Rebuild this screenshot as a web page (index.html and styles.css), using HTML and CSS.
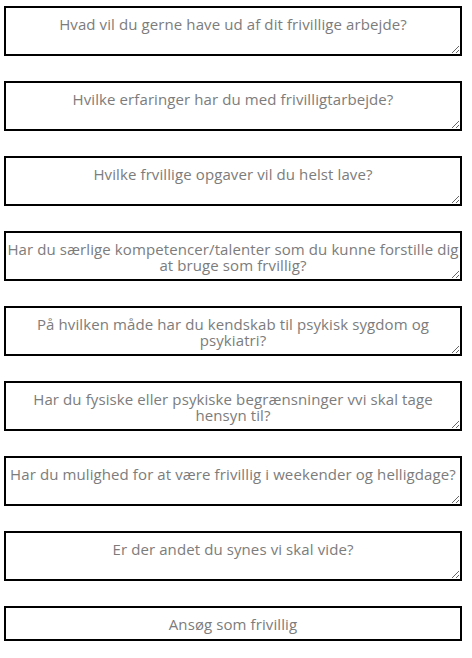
FILE: index.html
```html
<!DOCTYPE html>
<html lang="da">
<head>
  <meta charset="UTF-8">
  <meta name="viewport" content="width=device-width, initial-scale=1.0">
  <title>Frivillig</title>
  <link rel="stylesheet" href="styles.css">
</head>
<body>
  <form class="frivillig-form">
    <textarea class="felt" placeholder="Hvad vil du gerne have ud af dit frivillige arbejde?"></textarea>
    <textarea class="felt" placeholder="Hvilke erfaringer har du med frivilligtarbejde?"></textarea>
    <textarea class="felt" placeholder="Hvilke frvillige opgaver vil du helst lave?"></textarea>
    <textarea class="felt" placeholder="Har du særlige kompetencer/talenter som du kunne forstille dig&#10;at bruge som frvillig?"></textarea>
    <textarea class="felt" placeholder="På hvilken måde har du kendskab til psykisk sygdom og&#10;psykiatri?"></textarea>
    <textarea class="felt" placeholder="Har du fysiske eller psykiske begrænsninger vvi skal tage&#10;hensyn til?"></textarea>
    <textarea class="felt" placeholder="Har du mulighed for at være frivillig i weekender og helligdage?"></textarea>
    <textarea class="felt" placeholder="Er der andet du synes vi skal vide?"></textarea>
    <button type="submit" class="send-knap">Ansøg som frivillig</button>
  </form>
</body>
</html>
```

FILE: styles.css
```css
* { margin: 0; padding: 0; box-sizing: border-box; }
body { background: #fff; font-family: 'Open Sans', sans-serif; padding: 6px 10px 0 4px; }
.frivillig-form { display: flex; flex-direction: column; gap: 25px; }
.felt { width: 100%; height: 50px; border: 2px solid #000; padding: 8px 0 0; font-family: inherit; font-size: 15px; letter-spacing: 0.1px; line-height: 16px; color: #333; text-align: center; background: #fff; }
.felt::placeholder { color: #7c7c7c; }
.send-knap { width: 100%; height: 35px; border: 2px solid #000; background: #fff; font-family: inherit; font-size: 15px; letter-spacing: 0.1px; color: #7c7c7c; cursor: pointer; }
```
